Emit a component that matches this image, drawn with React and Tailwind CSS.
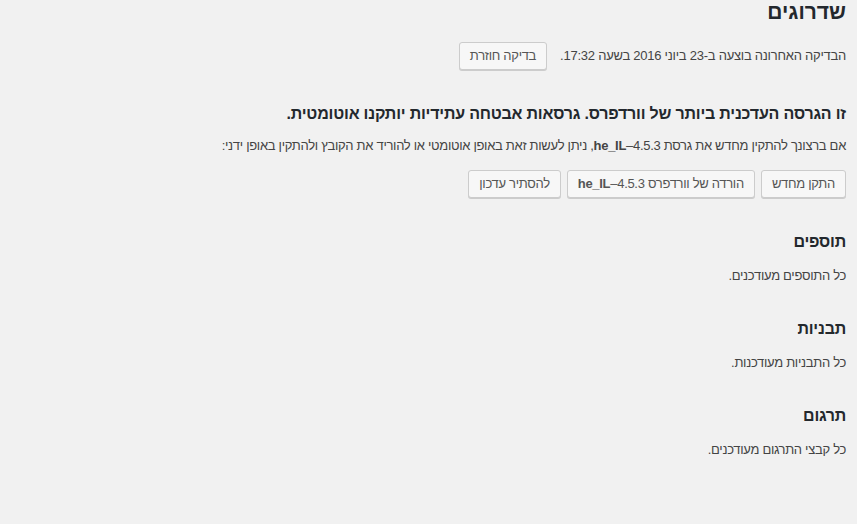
import React from "react";

const btn =
  "inline-flex items-center h-[28px] px-[10px] pb-[1px] border border-[#cccccc] bg-[#f7f7f7] rounded-[3px] shadow-[0_1px_0_#cccccc] text-[13px] tracking-[-0.3px] text-[#555555] leading-[26px] whitespace-nowrap";

function Section({ title, text }) {
  return (
    <div className="mt-[33px]">
      <h3 className="text-[16px] leading-[22px] tracking-[-0.2px] font-bold text-[#23282d]">{title}</h3>
      <p className="mt-[13px] text-[13px] tracking-[-0.3px] leading-[19px] text-[#444444]">{text}</p>
    </div>
  );
}

export default function App() {
  return (
    <div
      dir="rtl"
      className="w-[857px] h-[524px] bg-[#f1f1f1] overflow-hidden pr-[11px] pl-[20px]"
      style={{ fontFamily: '"Liberation Sans", Arial, sans-serif' }}
    >
      <h1 className="text-[21px] leading-[24px] font-bold text-[#23282d]">שדרוגים</h1>
      <div className="mt-[18px] flex items-center gap-[13px] text-[13px] tracking-[-0.25px] text-[#444444]">
        <span>הבדיקה האחרונה בוצעה ב-23 ביוני 2016 בשעה 17:32.</span>
        <span className={btn}>בדיקה חוזרת</span>
      </div>
      <h2 className="mt-[33px] text-[16px] leading-[22px] tracking-[-0.2px] font-bold text-[#23282d]">
        זו הגרסה העדכנית ביותר של וורדפרס. גרסאות אבטחה עתידיות יותקנו אוטומטית.
      </h2>
      <p className="mt-[11px] text-[13px] tracking-[-0.3px] leading-[19px] text-[#444444]">
        אם ברצונך להתקין מחדש את גרסת 4.5.3–<strong>he_IL</strong>, ניתן לעשות זאת באופן אוטומטי או להוריד את הקובץ ולהתקין באופן ידני:
      </p>
      <div className="mt-[15px] flex gap-[6px]">
        <span className={btn}>התקן מחדש</span>
        <span className={btn}>
          הורדה של וורדפרס 4.5.3–<strong>he_IL</strong>
        </span>
        <span className={btn}>להסתיר עדכון</span>
      </div>
      <Section title="תוספים" text="כל התוספים מעודכנים." />
      <Section title="תבניות" text="כל התבניות מעודכנות." />
      <Section title="תרגום" text="כל קבצי התרגום מעודכנים." />
    </div>
  );
}
